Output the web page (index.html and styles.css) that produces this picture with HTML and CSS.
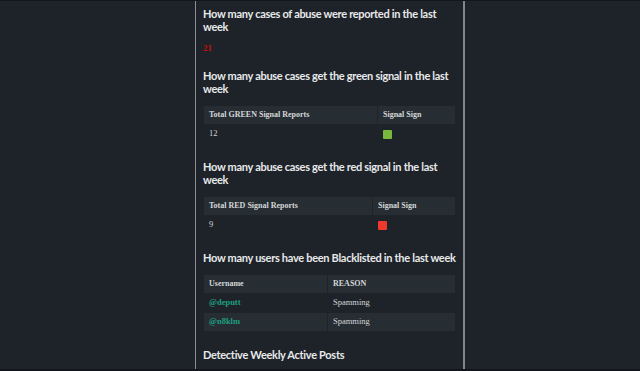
FILE: index.html
```html
<!DOCTYPE html>
<html>
<head>
    <meta charset="utf-8" />
    <title>Detective Weekly Report</title>
    <link rel="stylesheet" href="styles.css">
</head>
<body>
    <div class="report">
        <h3>How many cases of abuse were reported in the last week</h3>
        <p class="count"><b>21</b></p>

        <h3>How many abuse cases get the green signal in the last week</h3>
        <table class="sig green">
            <thead>
                <tr><th>Total GREEN Signal Reports</th><th>Signal Sign</th></tr>
            </thead>
            <tbody>
                <tr><td>12</td><td><span class="box box-green"></span></td></tr>
            </tbody>
        </table>

        <h3>How many abuse cases get the red signal in the last week</h3>
        <table class="sig red">
            <thead>
                <tr><th>Total RED Signal Reports</th><th>Signal Sign</th></tr>
            </thead>
            <tbody>
                <tr><td>9</td><td><span class="box box-red"></span></td></tr>
            </tbody>
        </table>

        <h3>How many users have been Blacklisted in the last week</h3>
        <table class="sig black">
            <thead>
                <tr><th>Username</th><th>REASON</th></tr>
            </thead>
            <tbody>
                <tr><td><a href="javascript:;">@deputt</a></td><td>Spamming</td></tr>
                <tr><td><a href="javascript:;">@n8klm</a></td><td>Spamming</td></tr>
            </tbody>
        </table>

        <h3>Detective Weekly Active Posts</h3>
    </div>
</body>
</html>
```

FILE: styles.css
```css
html, body {
    margin: 0;
    padding: 0;
    height: 100%;
}

body {
    background: #1e2329;
    border-top: 1px solid #13171b;
    border-bottom: 2px solid #13171b;
    box-sizing: border-box;
    overflow: hidden;
    font: 8.5px/1.5 "Liberation Serif", serif;
    color: #d4d6d8;
}

.report {
    width: 253px;
    margin-left: 195px;
    padding: 0 7px;
    min-height: 100%;
    border-left: 1px solid #8a8f94;
    border-right: 2px solid #80868c;
}

.report h3 {
    margin: 0;
    padding: 6px 0 0;
    font: 700 11px/13px Lato, sans-serif;
    letter-spacing: -0.3px;
    color: #e8e9ea;
}

.count {
    margin: 9px 0 0;
    color: #c40e0e;
    font-size: 9px;
}

.report .count + h3 {
    padding-top: 13px;
}

.report table + h3 {
    padding-top: 16px;
}

.sig {
    width: 100%;
    margin-top: 10px;
    border-collapse: collapse;
}

.sig th,
.sig td {
    text-align: left;
    padding: 0 5px;
    height: 18px;
    border: 1px solid #1e2329;
}

.sig th {
    font-weight: bold;
    font-size: 8px;
    background: #262d33;
}

.sig tbody tr:nth-child(2n) td {
    background: #262d33;
}

.green th:first-child { width: 163px; }
.red th:first-child { width: 158px; }
.black th:first-child { width: 113px; }

.sig a {
    color: #1f9e80;
    font-weight: bold;
    text-decoration: none;
}

.box {
    display: inline-block;
    width: 9px;
    height: 9px;
    vertical-align: middle;
    border-radius: 1px;
}

.box-green { background: #78b83a; }
.box-red { background: #f0392d; }
```
